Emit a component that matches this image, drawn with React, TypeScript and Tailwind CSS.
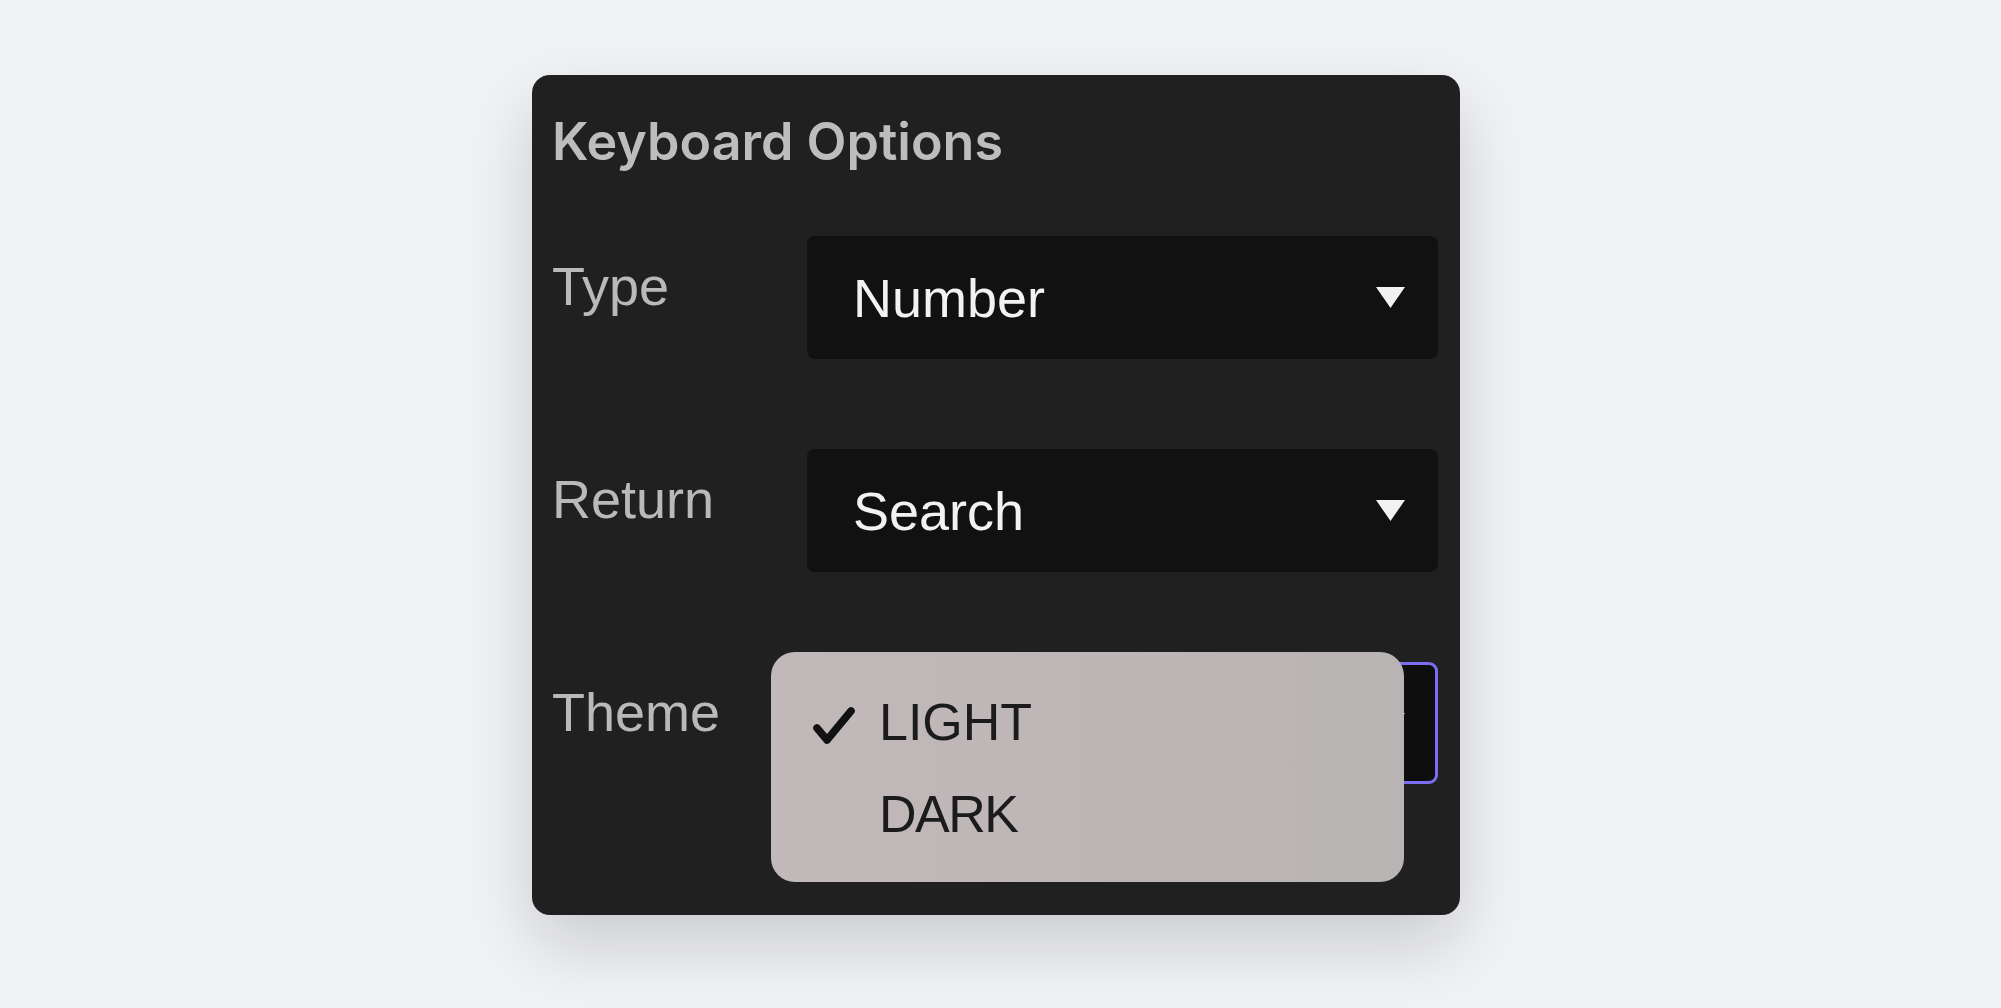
import React from 'react';

// Small down-pointing triangle used by the select boxes
function Caret() {
  return (
    <svg width="29" height="21" viewBox="0 0 29 21" className="shrink-0">
      <polygon points="0,0 29,0 14.5,21" fill="#f2f2f2" />
    </svg>
  );
}

function Check() {
  return (
    <svg width="42" height="39" viewBox="0 0 42 39" className="mt-[6px]">
      <path
        d="M4 22 L14 34 L38 5"
        fill="none"
        stroke="#111111"
        strokeWidth="7.5"
        strokeLinecap="round"
        strokeLinejoin="round"
      />
    </svg>
  );
}

interface RowProps {
  label: string;
  children: React.ReactNode;
}

function Row({ label, children }: RowProps) {
  return (
    <div className="flex">
      <div className="w-[255px] shrink-0 mt-[23px] text-[54px] leading-none text-[#b9b9b9] font-['Liberation_Sans',Arial,sans-serif]">
        {label}
      </div>
      <div className="relative flex-1">{children}</div>
    </div>
  );
}

function SelectBox({ value }: { value: string }) {
  return (
    <div className="flex h-[123px] items-center justify-between rounded-[8px] bg-[#111111] pl-[46px] pr-[33px]">
      <span className="text-[54px] leading-none text-[#f2f2f2] font-['Liberation_Sans',Arial,sans-serif]">
        {value}
      </span>
      <Caret />
    </div>
  );
}

export default function App() {
  return (
    <div className="min-h-screen w-full bg-[#f1f2f6] pt-[75px]">
      <div className="ml-[532px] w-[928px] h-[840px] rounded-[18px] bg-[#202020] pl-[20px] pr-[22px] pt-[41px] shadow-[0_30px_70px_rgba(0,0,0,0.16)]">
        <h1 className="text-[52px] leading-none font-semibold text-[#bdbdbd] font-['Inter',sans-serif] tracking-[0px]">
          Keyboard Options
        </h1>

        <div className="mt-[68px] flex flex-col gap-[90px]">
          <Row label="Type">
            <SelectBox value="Number" />
          </Row>

          <Row label="Return">
            <SelectBox value="Search" />
          </Row>

          <Row label="Theme">
            <div className="flex h-[122px] items-center justify-end rounded-[9px] border-[3px] border-[#7b6ef0] bg-[#0e0e0e] pr-[30px]">
              <Caret />
            </div>

            {/* open dropdown menu */}
            <div className="absolute left-[-36px] top-[-10px] w-[633px] h-[230px] rounded-[24px] bg-linear-to-r from-[#c1b8b9] to-[#b9b4b4] pt-[24px] pl-[42px] font-['Liberation_Sans',Arial,sans-serif] text-[52px] leading-[92px] text-[#1b1b1b]">
              <div className="flex items-center">
                <div className="w-[66px] shrink-0">
                  <Check />
                </div>
                <span>LIGHT</span>
              </div>
              <div className="flex items-center">
                <div className="w-[66px] shrink-0" />
                <span className="tracking-[-1.5px]">DARK</span>
              </div>
            </div>
          </Row>
        </div>
      </div>
    </div>
  );
}
